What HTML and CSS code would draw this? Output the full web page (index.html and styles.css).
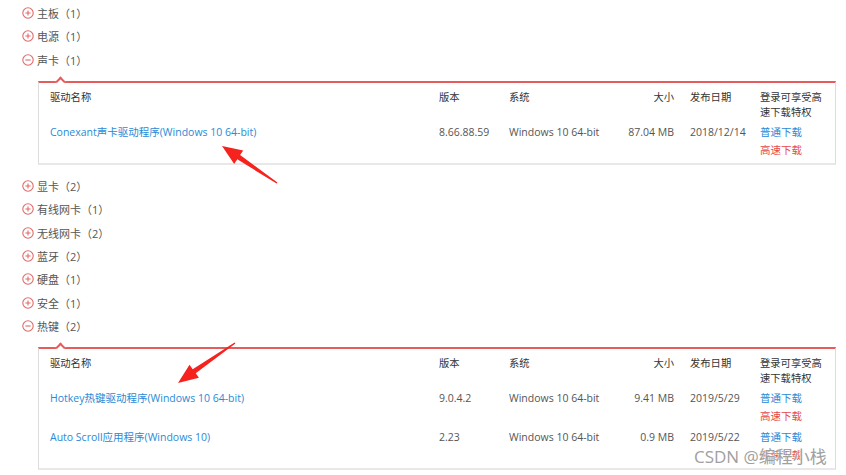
FILE: index.html
```html
<!DOCTYPE html>
<html lang="zh-CN">
<head>
    <meta charset="UTF-8">
    <title>驱动列表</title>
    <link rel="stylesheet" href="styles.css">
</head>
<body>

    <ul class="category-list">
        <li class="category">
            <div class="category-title"><svg class="toggle" viewBox="0 0 12 12"><circle cx="6" cy="6" r="5.2"/><path d="M3.4 6h5.2M6 3.4v5.2"/></svg>主板（1）</div>
        </li>
        <li class="category">
            <div class="category-title"><svg class="toggle" viewBox="0 0 12 12"><circle cx="6" cy="6" r="5.2"/><path d="M3.4 6h5.2M6 3.4v5.2"/></svg>电源（1）</div>
        </li>
        <li class="category">
            <div class="category-title"><svg class="toggle" viewBox="0 0 12 12"><circle cx="6" cy="6" r="5.2"/><path d="M3.4 6h5.2"/></svg>声卡（1）</div>
            <div class="driver-panel">
                <div class="driver-row driver-head">
                    <div>驱动名称</div>
                    <div>版本</div>
                    <div>系统</div>
                    <div class="size">大小</div>
                    <div>发布日期</div>
                    <div>登录可享受高速下载特权</div>
                </div>
                <div class="driver-row">
                    <div><a class="link" href="#">Conexant声卡驱动程序(Windows 10 64-bit)</a></div>
                    <div>8.66.88.59</div>
                    <div>Windows 10 64-bit</div>
                    <div class="size">87.04 MB</div>
                    <div>2018/12/14</div>
                    <div class="downloads"><a class="link" href="#">普通下载</a><a class="link fast" href="#">高速下载</a></div>
                </div>
            </div>
        </li>
        <li class="category">
            <div class="category-title"><svg class="toggle" viewBox="0 0 12 12"><circle cx="6" cy="6" r="5.2"/><path d="M3.4 6h5.2M6 3.4v5.2"/></svg>显卡（2）</div>
        </li>
        <li class="category">
            <div class="category-title"><svg class="toggle" viewBox="0 0 12 12"><circle cx="6" cy="6" r="5.2"/><path d="M3.4 6h5.2M6 3.4v5.2"/></svg>有线网卡（1）</div>
        </li>
        <li class="category">
            <div class="category-title"><svg class="toggle" viewBox="0 0 12 12"><circle cx="6" cy="6" r="5.2"/><path d="M3.4 6h5.2M6 3.4v5.2"/></svg>无线网卡（2）</div>
        </li>
        <li class="category">
            <div class="category-title"><svg class="toggle" viewBox="0 0 12 12"><circle cx="6" cy="6" r="5.2"/><path d="M3.4 6h5.2M6 3.4v5.2"/></svg>蓝牙（2）</div>
        </li>
        <li class="category">
            <div class="category-title"><svg class="toggle" viewBox="0 0 12 12"><circle cx="6" cy="6" r="5.2"/><path d="M3.4 6h5.2M6 3.4v5.2"/></svg>硬盘（1）</div>
        </li>
        <li class="category">
            <div class="category-title"><svg class="toggle" viewBox="0 0 12 12"><circle cx="6" cy="6" r="5.2"/><path d="M3.4 6h5.2M6 3.4v5.2"/></svg>安全（1）</div>
        </li>
        <li class="category">
            <div class="category-title"><svg class="toggle" viewBox="0 0 12 12"><circle cx="6" cy="6" r="5.2"/><path d="M3.4 6h5.2"/></svg>热键（2）</div>
            <div class="driver-panel">
                <div class="driver-row driver-head">
                    <div>驱动名称</div>
                    <div>版本</div>
                    <div>系统</div>
                    <div class="size">大小</div>
                    <div>发布日期</div>
                    <div>登录可享受高速下载特权</div>
                </div>
                <div class="driver-row">
                    <div><a class="link" href="#">Hotkey热键驱动程序(Windows 10 64-bit)</a></div>
                    <div>9.0.4.2</div>
                    <div>Windows 10 64-bit</div>
                    <div class="size">9.41 MB</div>
                    <div>2019/5/29</div>
                    <div class="downloads"><a class="link" href="#">普通下载</a><a class="link fast" href="#">高速下载</a></div>
                </div>
                <div class="driver-row">
                    <div><a class="link" href="#">Auto Scroll应用程序(Windows 10)</a></div>
                    <div>2.23</div>
                    <div>Windows 10 64-bit</div>
                    <div class="size">0.9 MB</div>
                    <div>2019/5/22</div>
                    <div class="downloads"><a class="link" href="#">普通下载</a><a class="link fast" href="#">高速下载</a></div>
                </div>
            </div>
        </li>
    </ul>

    <!-- 截图标注的箭头 -->
    <svg class="marks" viewBox="0 0 846 475">
        <polygon points="222,146 243.2,150.5 240.1,155.1 277.4,182.4 276.6,183.6 237.3,159.3 234.2,163.9"/>
        <polygon points="178,383 198.9,377.7 195.7,373.2 235.4,343.6 234.6,342.4 192.7,369.2 189.5,364.7"/>
    </svg>

    <div class="watermark">CSDN @编程小栈</div>

</body>
</html>
```

FILE: styles.css
```css
body {
    margin: 0;
    font-family: "Open Sans", "Noto Sans CJK SC", sans-serif;
    color: #555;
    background-color: #fff;
    position: relative;
    width: 846px;
    height: 475px;
    overflow: hidden;
}

.category-list {
    list-style: none;
    margin: 0;
    padding: 1.5px 10px 0 22px;
}

.category-title {
    display: flex;
    align-items: center;
    height: 23.3px;
    font-size: 11px;
    color: #555;
}

.toggle {
    width: 12px;
    height: 12px;
    margin-right: 3px;
    fill: none;
    stroke: #e06a6a;
    stroke-width: 1.1;
}

.driver-panel {
    position: relative;
    margin: 10px 0 9px 16px;
    padding: 7px 8px 4px 11px;
    border-top: 2px solid #e65c5c;
    border-left: 1px solid #ddd;
    border-right: 1px solid #ddd;
    border-bottom: 2px solid #e8e8e8;
}

.driver-panel::before {
    content: "";
    position: absolute;
    top: -5px;
    left: 18px;
    width: 7px;
    height: 7px;
    box-sizing: border-box;
    background-color: #fff;
    border-top: 2px solid #e65c5c;
    border-left: 2px solid #e65c5c;
    transform: rotate(45deg);
}

.driver-row {
    display: grid;
    grid-template-columns: 389px 70px 106px 75px 70px 1fr;
    font-size: 10.5px;
    line-height: 18px;
    padding-top: 3px;
    color: #555;
}

.driver-head {
    font-size: 10.3px;
    line-height: 15px;
    padding-top: 0;
    color: #333;
}

.size {
    text-align: right;
    padding-right: 16px;
}

.downloads {
    display: flex;
    flex-direction: column;
}

.link {
    color: #2a8ad6;
    text-decoration: none;
}

.link.fast {
    color: #e64a4a;
}

.marks {
    position: absolute;
    top: 0;
    left: 0;
    width: 846px;
    height: 475px;
    pointer-events: none;
    fill: #f5221d;
}

.watermark {
    position: absolute;
    left: 694px;
    top: 443px;
    font-size: 17px;
    color: #a0a0a0;
    text-shadow: 0 0 2px #fff, 0 0 1px #fff;
}
```
